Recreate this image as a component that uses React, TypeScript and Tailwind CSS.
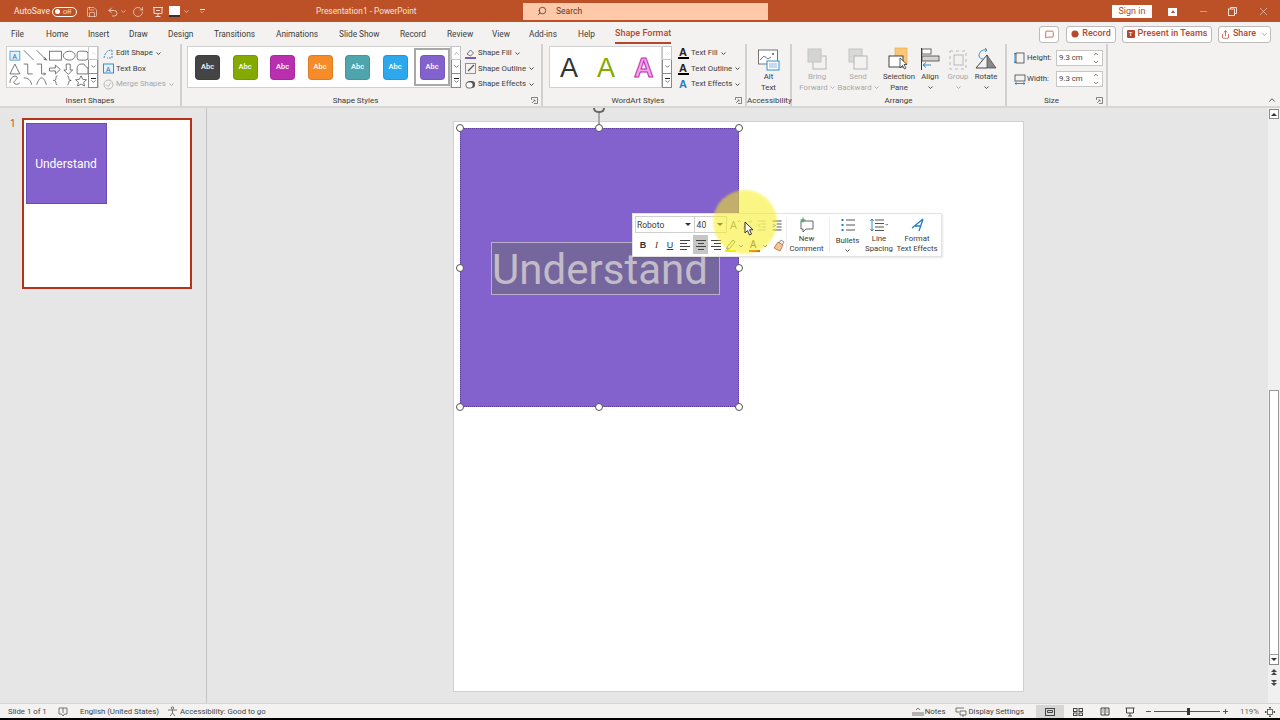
import { Search, ChevronDown, ChevronUp, X, Minus, Undo2, RotateCw, Save, MessageSquare, Share, Circle } from "lucide-react";
import type { ReactNode } from "react";

const tabs = [
  { label: "File", cls: "w-[35px]" },
  { label: "Home", cls: "w-[42px]" },
  { label: "Insert", cls: "w-[41px]" },
  { label: "Draw", cls: "w-[39px]" },
  { label: "Design", cls: "w-[46px]" },
  { label: "Transitions", cls: "w-[62px]" },
  { label: "Animations", cls: "w-[63px]" },
  { label: "Slide Show", cls: "w-[61px]" },
  { label: "Record", cls: "w-[47px]" },
  { label: "Review", cls: "w-[45px]" },
  { label: "View", cls: "w-[37px]" },
  { label: "Add-ins", cls: "w-[49px]" },
  { label: "Help", cls: "w-[37px]" },
];

const swatches = ["bg-[#444444]", "bg-[#84aa00]", "bg-[#b92fb0]", "bg-[#f68b2a]", "bg-[#4ea5ae]", "bg-[#2da8ec]", "bg-[#8362cd]"];

function Caret({ className = "" }: { className?: string }) {
  return (
    <svg width="5" height="3" viewBox="0 0 5 3" className={`inline-block shrink-0 ${className}`}>
      <path d="M0.5 0.5 2.500 2.500 4.500 0.5" fill="none" stroke="currentColor" strokeWidth="0.9" />
    </svg>
  );
}

function ScrollButtons({ first = false }: { first?: boolean }) {
  return (
    <div className="mt-[2px] flex w-[10px] shrink-0 flex-col">
      <div className="flex h-[14px] items-center justify-center border border-[#c6c6c6] bg-white">
        <ChevronUp size={7} className={first ? "text-[#c8c8c8]" : "text-[#777]"} />
      </div>
      <div className="flex h-[14px] items-center justify-center border border-t-0 border-[#8a8a8a] bg-white">
        <ChevronDown size={7} className="text-[#222]" />
      </div>
      <div className="flex h-[14px] flex-col items-center justify-center border border-t-0 border-[#8a8a8a] bg-white">
        <div className="mb-[1px] h-px w-[5px] bg-[#222]" />
        <ChevronDown size={7} className="-my-[2px] text-[#222]" />
      </div>
    </div>
  );
}

function ShapesGlyphs() {
  return (
    <svg width="82" height="40" viewBox="0 0 82 40" fill="none" stroke="#555" strokeWidth="0.8" className="mt-px">
      <rect x="3" y="3" width="10" height="9" stroke="#2f8fd0" fill="#e4f1fb" />
      <text x="5.500" y="10.500" fontSize="7" fill="#2b6cb0" stroke="none" fontFamily="Noto Sans">A</text>
      <path d="M17 2 27 12M30 2 40 12M38 9l2 3-3-1" />
      <rect x="43" y="3" width="12" height="9" />
      <ellipse cx="63" cy="7.500" rx="6" ry="4.500" />
      <rect x="71" y="3" width="11" height="9" rx="2.500" />
      <path d="M3 26 8 16l5 10Z" />
      <path d="M17 16h4v10h5M30 16h5v10h4M37.500 24.500l1.500 1.500-1.500 1.500" />
      <path d="M43 20h6v-3l5 4.500-5 4.500v-3h-6Z" />
      <path d="M60 16h4v6h2.500l-4.500 4.500-4.500-4.500h2.500Z" />
      <path d="M71 26v-6c0-2 1.500-4 4-4h3c1 2 2 3 4 4v6Z" />
      <path d="M3 35c0-6 5-8 7-6s-4 4-3 6 4 2 6 0" />
      <path d="M17 30c4 0 7 2 8 7M30 37c2-5 3-7 5-7s3 2 5 7" />
      <path d="M51 28c-2 0-1 3-2 4-.5.5-1 .6-2 .6 1 0 1.500.100 2 .6 1 1 0 4 2 4" />
      <path d="M61 28c2 0 1 3 2 4 .5.5 1 .6 2 .6-1 0-1.500.100-2 .6-1 1 0 4-2 4" />
      <path d="m75 28 1.800 3.500 3.700.4-2.800 2.500.8 3.800-3.500-1.900-3.500 1.900.8-3.800-2.800-2.500 3.700-.4Z" />
    </svg>
  );
}

function SideItem({ icon, label, disabled = false }: { icon: ReactNode; label: string; disabled?: boolean }) {
  return (
    <div className={`flex h-[15.500px] items-center gap-[2px] whitespace-nowrap ${disabled ? "text-[#a6a6a6]" : "text-[#3b3b3b]"}`}>
      <span className="flex w-[12px] justify-center">{icon}</span>
      <span>{label}</span>
      <Caret className="ml-px" />
    </div>
  );
}

function Launcher() {
  return (
    <svg width="7" height="7" viewBox="0 0 7 7" className="absolute bottom-[2px] right-[3px]" fill="none" stroke="#666" strokeWidth="0.8">
      <path d="M.5 3V.5H6.500V6.500H3" />
      <path d="M1 6 4 3M2.500 3H4V4.500" />
    </svg>
  );
}

function Group({ label, className, labelCls = "", children, launcher = false }: { label: string; className: string; labelCls?: string; children: ReactNode; launcher?: boolean }) {
  return (
    <div className={`relative flex h-full shrink-0 flex-col border-r-2 border-[#d2d0ce] ${className}`}>
      <div className="flex min-h-0 flex-1 items-start">{children}</div>
      <div className={`h-[11px] whitespace-nowrap text-center text-[8px] leading-[12px] text-[#3b3b3b] ${labelCls}`}>{label}</div>
      {launcher && <Launcher />}
    </div>
  );
}

function BigButton({ icon, lines, caret = false, disabled = false, className = "" }: { icon: ReactNode; lines: string[]; caret?: boolean; disabled?: boolean; className?: string }) {
  return (
    <div className={`flex shrink-0 flex-col items-center whitespace-nowrap text-center leading-[11px] ${disabled ? "text-[#a9a9a9]" : "text-[#3b3b3b]"} ${className}`}>
      <div className="flex h-[27px] items-end">{icon}</div>
      <div>{lines[0]}</div>
      <div className="flex h-[11px] items-center gap-[2px]">
        {lines[1]}
        {caret && <Caret />}
      </div>
    </div>
  );
}

function TwoSquares({ back = false }: { back?: boolean }) {
  return (
    <svg width="20" height="24" viewBox="0 0 20 24">
      {back ? (
        <>
          <rect x="1" y="2" width="13" height="13" fill="#d9d9d9" stroke="#c4c4c4" />
          <rect x="6" y="9" width="13" height="13" fill="#f3f2f1" stroke="#b4b4b4" />
        </>
      ) : (
        <>
          <rect x="6" y="9" width="13" height="13" fill="#f3f2f1" stroke="#b4b4b4" />
          <rect x="1" y="2" width="13" height="13" fill="#d4d4d4" stroke="#c4c4c4" />
        </>
      )}
    </svg>
  );
}

function SizeRow({ icon, label }: { icon: ReactNode; label: string }) {
  return (
    <div className="flex h-[16px] items-center">
      <span className="flex w-[13px] justify-center">{icon}</span>
      <span className="w-[30px] pl-[1px] text-[#3b3b3b]">{label}</span>
      <div className="flex h-[16px] w-[47px] items-center justify-between border border-[#c8c6c4] bg-white pl-[2px] pr-[3px] text-[#444]">
        <span>9.3 cm</span>
        <span className="flex flex-col gap-[2px]">
          <ChevronUp size={6} strokeWidth={3} />
          <ChevronDown size={6} strokeWidth={3} />
        </span>
      </div>
    </div>
  );
}

function MiniToolbar() {
  const alignLines = [
    ["w-[10px]", "w-[7px]", "w-[10px]", "w-[7px]", "items-start"],
    ["w-[10px]", "w-[6px]", "w-[10px]", "w-[6px]", "items-center"],
    ["w-[10px]", "w-[7px]", "w-[10px]", "w-[7px]", "items-end"],
  ];
  return (
    <div className="absolute left-[632px] top-[213px] z-20 flex h-[44px] w-[310px] border border-[#e3e3e3] bg-white text-[7.800px] leading-[10px] text-[#3b3b3b] shadow-[1px_1px_2px_rgba(0,0,0,0.1)]">
      <div className="flex w-[153px] shrink-0 flex-col pl-[2px] pt-[2px]">
        <div className="flex h-[17px] items-center">
          <div className="flex h-[17px] w-[60px] items-center justify-between border border-[#d0d0d0] pl-[1px] pr-[3px]">
            <span className="text-[8.500px]">Roboto</span>
            <span className="h-0 w-0 border-x-[3px] border-t-[3px] border-x-transparent border-t-[#333]" />
          </div>
          <div className="flex h-[17px] w-[33px] items-center justify-between border border-l-0 border-[#d0d0d0] pl-[2px] pr-[3px]">
            <span className="text-[8.500px]">40</span>
            <span className="h-0 w-0 border-x-[3px] border-t-[3px] border-x-transparent border-t-[#333]" />
          </div>
          <svg width="58" height="14" viewBox="0 0 58 14" className="ml-[1px]">
            <text x="2" y="11" fontSize="11" fill="#8c8c8c" fontFamily="Noto Sans">A</text>
            <path d="M10 4l1.500-1.500L13 4" fill="none" stroke="#8c8c8c" strokeWidth=".7" />
            <text x="15" y="11" fontSize="9" fill="#8c8c8c" fontFamily="Noto Sans">A</text>
            <path d="M21 3l1.500 1.500L24 3" fill="none" stroke="#6aa83a" strokeWidth=".7" />
            <path d="M30 3h8M34 6h4M34 9h4M30 12h8" stroke="#bcbcbc" strokeWidth="1" />
            <path d="M33 6 30 7.500 33 9" fill="none" stroke="#a8cfa0" strokeWidth=".8" />
            <path d="M45 3h9M49 6h5M49 9h5M45 12h9" stroke="#555" strokeWidth="1" />
            <path d="M45 6l3 1.500L45 9" fill="none" stroke="#2f8fd0" strokeWidth=".8" />
          </svg>
        </div>
        <div className="mt-[2px] flex h-[19px] items-center pl-[1px]">
          <span className="flex w-[14px] justify-center font-['Liberation_Sans',sans-serif] text-[9px] font-bold text-[#333]">B</span>
          <span className="flex w-[13px] justify-center font-['Liberation_Serif',serif] text-[9px] italic text-[#333]">I</span>
          <span className="flex w-[14px] justify-center font-['Liberation_Sans',sans-serif] text-[9px] text-[#333] underline">U</span>
          <span className="w-px" />
          {alignLines.map((a, i) => (
            <span key={i} className={`flex h-[19px] w-[15px] flex-col justify-center gap-[2px] px-[2px] ${a[4]} ${i === 1 ? "bg-[#c6c6c6]" : ""}`}>
              <span className={`h-px bg-[#444] ${a[0]}`} />
              <span className={`h-px bg-[#444] ${a[1]}`} />
              <span className={`h-px bg-[#444] ${a[2]}`} />
              <span className={`h-px bg-[#444] ${a[3]}`} />
            </span>
          ))}
          <svg width="62" height="16" viewBox="0 0 62 16">
            <path d="M4 10 10 3l2 2-6 7H4Z" fill="none" stroke="#6d6d4a" strokeWidth=".9" />
            <rect x="2" y="13" width="11" height="2" fill="#f4e900" />
            <path d="M16 8l2 2 2-2" fill="none" stroke="#666" strokeWidth=".8" />
            <text x="27" y="11" fontSize="10" fill="#555" fontFamily="Noto Sans">A</text>
            <rect x="26" y="13" width="11" height="2" fill="#e8410f" />
            <path d="M40 8l2 2 2-2" fill="none" stroke="#666" strokeWidth=".8" />
            <path d="M51 11l4-6 5 3-3 6Z" fill="#f3c59a" stroke="#c0662a" strokeWidth=".8" />
            <path d="M56 6l2-3 3 2-2 3" fill="none" stroke="#777" strokeWidth=".8" />
          </svg>
        </div>
      </div>
      <div className="my-[3px] w-px bg-[#ececec]" />
      <div className="flex w-[39px] shrink-0 flex-col items-center pt-[3px] text-center">
        <svg width="16" height="16" viewBox="0 0 16 16" fill="none">
          <path d="M2 4h12v8H7l-3 3v-3H2Z" stroke="#555" strokeWidth=".9" fill="#fff" />
          <path d="M4 0.500v5M1.500 3h5" stroke="#2e9b46" strokeWidth="1" />
        </svg>
        <span className="mt-[1px]">New</span>
        <span>Comment</span>
      </div>
      <div className="my-[3px] ml-[3px] w-px bg-[#ececec]" />
      <div className="flex w-[35px] shrink-0 flex-col items-center pt-[3px]">
        <svg width="16" height="16" viewBox="0 0 16 16">
          <path d="M6 3h9M6 8h9M6 13h9" stroke="#555" strokeWidth="1" />
          <path d="M1.500 3h2M1.500 8h2M1.500 13h2" stroke="#1f7fc4" strokeWidth="2" />
        </svg>
        <span className="mt-[3px]">Bullets</span>
        <Caret className="mt-[3px]" />
      </div>
      <div className="flex w-[28px] shrink-0 flex-col items-center whitespace-nowrap pt-[3px]">
        <svg width="20" height="16" viewBox="0 0 20 16" fill="none">
          <path d="M3 2v12M1.500 4 3 2l1.500 2M1.500 12 3 14l1.500-2" stroke="#1f7fc4" strokeWidth=".9" />
          <path d="M6 3h9M6 6.500h9M6 10h9M6 13.500h9" stroke="#555" strokeWidth="1" />
          <path d="M16.500 7l1.200 1.200L19 7" stroke="#555" strokeWidth=".8" />
        </svg>
        <span className="mt-[1px]">Line</span>
        <span>Spacing</span>
      </div>
      <div className="flex flex-1 flex-col items-center whitespace-nowrap pt-[3px]">
        <svg width="16" height="16" viewBox="0 0 16 16" fill="none">
          <path d="M14 2 3 11M14 2 10 14M6 9h6" stroke="#1f7fc4" strokeWidth="1.300" strokeLinejoin="round" />
        </svg>
        <span className="mt-[1px]">Format</span>
        <span>Text Effects</span>
      </div>
    </div>
  );
}

function Handle({ cls }: { cls: string }) {
  return <span className={`absolute z-10 h-[8px] w-[8px] rounded-full border border-[#555] bg-white ${cls}`} />;
}

export default function App() {
  return (
    <div className="relative flex h-[720px] w-[1280px] flex-col overflow-hidden bg-[#e6e6e6] font-['Roboto',sans-serif] text-[9px]">
      {/* title bar */}
      <header className="relative z-10 flex h-[22px] shrink-0 items-center bg-[#bc5127] pt-px text-[#fbeee8]">
        <div className="flex w-[316px] shrink-0 items-center">
          <span className="ml-[14px] w-[36px] whitespace-nowrap text-[8.500px]">AutoSave</span>
          <span className="ml-[2px] flex h-[10px] w-[25px] items-center gap-[3px] rounded-full border border-white pl-[2px] text-[6px]">
            <span className="h-[5px] w-[5px] rounded-full bg-white" />
            Off
          </span>
          <Save size={12} strokeWidth={1.2} className="ml-[9px]" />
          <Undo2 size={12} strokeWidth={1.4} className="ml-[9px]" />
          <ChevronDown size={7} className="ml-px" />
          <RotateCw size={12} strokeWidth={1.2} className="ml-[5px]" />
          <svg width="12" height="12" viewBox="0 0 12 12" fill="none" stroke="currentColor" className="ml-[8px]">
            <path d="M1 1.500h10M2 1.500v6h8v-6M6 7.500v3M3.500 10.500h5M4 4.500h4" strokeWidth=".9" />
          </svg>
          <span className="ml-[5px] flex h-[11px] w-[11px] flex-col justify-end bg-white">
            <span className="h-[2px] bg-[#333]" />
          </span>
          <ChevronDown size={7} className="ml-[3px]" />
          <span className="ml-[9px] flex flex-col items-center">
            <span className="h-px w-[5px] bg-white" />
            <ChevronDown size={6} className="-mt-px" />
          </span>
        </div>
        <span className="w-[207px] shrink-0 whitespace-nowrap text-[8.300px] text-[#f6e3da]">Presentation1 - PowerPoint</span>
        <div className="-mt-px flex h-[17px] w-[245px] shrink-0 items-center bg-[#fdc9a8] text-[8.500px] text-[#5a3a2a]">
          <Search size={10} className="ml-[14px] -scale-x-100" />
          <span className="ml-[9px]">Search</span>
        </div>
        <div className="ml-auto flex items-center">
          <span className="flex h-[13px] w-[40px] items-center justify-center bg-white text-[#b5431f]">Sign in</span>
          <span className="ml-[16px] flex h-[8px] w-[9px] items-start justify-center bg-white">
            <span className="mt-[2px] h-0 w-0 border-x-[2px] border-b-[3px] border-x-transparent border-b-[#bc5127]" />
          </span>
          <Minus size={11} strokeWidth={1} className="ml-[21px]" />
          <svg width="9" height="9" viewBox="0 0 9 9" fill="none" stroke="currentColor" strokeWidth=".9" className="ml-[19px]">
            <rect x=".5" y="2" width="6" height="6.500" />
            <path d="M2.500 2V.5h6v6H6.500" />
          </svg>
          <X size={13} strokeWidth={1} className="ml-[20px] mr-[10px]" />
        </div>
      </header>

      {/* tabs */}
      <nav className="relative z-10 flex h-[22px] shrink-0 items-center bg-[#f3f2f1] pl-[11px] pt-[2px] text-[8.300px] text-[#3b3b3b]">
        {tabs.map((t) => (
          <span key={t.label} className={`whitespace-nowrap ${t.cls}`}>
            {t.label}
          </span>
        ))}
        <span className="relative whitespace-nowrap text-[9px] font-medium text-[#b7472a]">
          Shape Format
          <span className="absolute -bottom-[3px] left-0 right-0 h-[2px] bg-[#b7472a]" />
        </span>
        <div className="ml-auto mr-[9px] flex items-center gap-[6px] text-[9px]">
          <span className="mr-px flex h-[17px] w-[20px] items-center justify-center rounded-[3px] border border-[#bdbbb9] bg-white">
            <MessageSquare size={9} className="text-[#b7472a]" />
          </span>
          <span className="flex h-[17px] w-[50px] items-center justify-center gap-[3px] rounded-[3px] border border-[#bdbbb9] bg-white font-medium text-[#b7472a]">
            <Circle size={8} fill="#b7472a" strokeWidth={1.5} />
            Record
          </span>
          <span className="flex h-[17px] w-[90px] items-center justify-center gap-[3px] whitespace-nowrap rounded-[3px] border border-[#bdbbb9] bg-white font-medium text-[#b7472a]">
            <span className="flex h-[8px] w-[8px] items-center justify-center rounded-[1px] bg-[#b7472a] text-[6px] leading-none text-white">T</span>
            Present in Teams
          </span>
          <span className="flex h-[17px] w-[53px] items-center justify-center gap-[3px] rounded-[3px] border border-[#bdbbb9] bg-white font-medium text-[#b7472a]">
            <Share size={9} />
            Share
            <ChevronDown size={7} className="ml-[2px]" />
          </span>
        </div>
      </nav>

      {/* ribbon */}
      <section className="relative z-10 flex h-[64px] shrink-0 items-stretch border-b-2 border-[#d8d6d4] bg-[#f3f2f1] text-[7.800px]">
        <Group label="Insert Shapes" className="w-[182px]">
          <div className="ml-[6px] mt-[2px] flex h-[42px] w-[93px] border border-[#d0d0d0] bg-white">
            <ShapesGlyphs />
            <div className="-mt-[3px]">
              <ScrollButtons first />
            </div>
          </div>
          <div className="ml-[3px] mt-[1.500px] flex flex-col">
            <SideItem
              label="Edit Shape"
              icon={
                <svg width="11" height="11" viewBox="0 0 11 11" fill="none">
                  <path d="M1 10c1-5 3-8 8-8M9 2v8H4" stroke="#1f7fc4" strokeWidth=".9" strokeDasharray="2 1" />
                </svg>
              }
            />
            <div className="flex h-[15.500px] items-center gap-[2px] text-[#3b3b3b]">
              <span className="flex w-[12px] justify-center">
                <svg width="11" height="11" viewBox="0 0 11 11">
                  <rect x=".5" y="1" width="10" height="9" fill="#e4f1fb" stroke="#2f8fd0" />
                  <text x="3" y="8.500" fontSize="7" fill="#2b6cb0" fontFamily="Noto Sans">A</text>
                </svg>
              </span>
              Text Box
            </div>
            <SideItem
              disabled
              label="Merge Shapes"
              icon={
                <svg width="11" height="11" viewBox="0 0 11 11" fill="none" stroke="#b8b8b8">
                  <circle cx="5.500" cy="5.500" r="4.500" />
                  <path d="M3 5.500 5 7.500 8 3.500" />
                </svg>
              }
            />
          </div>
        </Group>

        <Group label="Shape Styles" labelCls="pr-[12px]" className="w-[361px]" launcher>
          <div className="ml-[5px] mt-[2px] flex h-[42px] w-[264px] items-center border border-[#d0d0d0] bg-white pl-[7px]">
            {swatches.map((s, i) => (
              <div key={s} className={`flex shrink-0 items-center justify-center ${i === 6 ? "ml-[-6px] h-[38px] w-[36px] border-2 border-[#a8a8a8] shadow-[inset_0_0_0_1px_#fff]" : "mr-[12.500px]"}`}>
                <span className={`flex h-[25px] w-[25px] items-center justify-center rounded-[4px] border border-black/10 text-[7.500px] font-medium text-white ${s}`}>Abc</span>
              </div>
            ))}
          </div>
          <ScrollButtons />
          <div className="ml-[3px] mt-[1.500px] flex flex-col">
            <SideItem
              label="Shape Fill"
              icon={
                <svg width="11" height="11" viewBox="0 0 11 11" fill="none">
                  <path d="M2 6 5.500 2l3 3-3 3Z" stroke="#555" strokeWidth=".8" />
                  <rect x="0" y="9" width="11" height="2" fill="#7a5bc0" />
                </svg>
              }
            />
            <SideItem
              label="Shape Outline"
              icon={
                <svg width="11" height="11" viewBox="0 0 11 11" fill="none">
                  <rect x=".5" y=".5" width="10" height="10" stroke="#6d9dc7" />
                  <path d="M3 8 9 2" stroke="#555" strokeWidth="1.200" />
                </svg>
              }
            />
            <SideItem
              label="Shape Effects"
              icon={
                <svg width="11" height="11" viewBox="0 0 11 11" fill="none">
                  <rect x="2" y="2" width="8" height="7" rx="3" fill="#555" />
                  <rect x="1" y="3" width="7" height="6" rx="2.500" fill="#fff" stroke="#444" strokeWidth=".8" />
                </svg>
              }
            />
          </div>
        </Group>

        <Group label="WordArt Styles" labelCls="pr-[12px]" className="w-[204px]" launcher>
          <div className="ml-[6px] mt-[2px] flex h-[42px] w-[113px] items-center border border-[#d0d0d0] bg-white pl-[10px] pt-[3px]">
            <span className="w-[37px] font-['Liberation_Sans',sans-serif] text-[27px] leading-none text-[#333]">A</span>
            <span className="w-[37px] font-['Liberation_Sans',sans-serif] text-[27px] leading-none text-[#84aa00]">A</span>
            <span className="font-['Liberation_Sans',sans-serif] text-[27px] font-bold leading-none text-[#f6a6ee] [-webkit-text-stroke:1px_#b92fb0]">A</span>
          </div>
          <ScrollButtons first />
          <div className="ml-[5px] mt-[1.500px] flex flex-col">
            {[
              ["Text Fill", "#222"],
              ["Text Outline", "#222"],
              ["Text Effects", "#1f7fc4"],
            ].map(([label, color]) => (
              <SideItem
                key={label}
                label={label}
                icon={
                  <span className="flex flex-col items-center font-['Liberation_Sans',sans-serif] text-[11px] font-bold leading-[10px]" style={{ color }}>
                    A
                    {label !== "Text Effects" && <span className="h-[2px] w-[11px] bg-black" />}
                  </span>
                }
              />
            ))}
          </div>
        </Group>

        <Group label="Accessibility" className="w-[45px]">
          <BigButton
            className="w-full"
            lines={["Alt", "Text"]}
            icon={
              <svg width="22" height="22" viewBox="0 0 22 22" fill="none">
                <rect x=".5" y="1" width="19" height="14" fill="#fff" stroke="#555" strokeWidth=".8" />
                <path d="M2 11l4-4 4 3 3-2" stroke="#555" strokeWidth=".8" />
                <circle cx="15" cy="5" r="1" fill="#555" />
                <rect x="9" y="12" width="12" height="9" fill="#fff" stroke="#2f8fd0" />
                <rect x="11" y="14" width="8" height="5" fill="#bfdcf0" />
              </svg>
            }
          />
        </Group>

        <Group label="Arrange" className="w-[215px]">
          <div className="flex h-full w-full justify-start pl-[6px]">
            <BigButton className="w-[38px]" disabled caret lines={["Bring", "Forward"]} icon={<TwoSquares />} />
            <BigButton className="w-[44px]" disabled caret lines={["Send", "Backward"]} icon={<TwoSquares back />} />
            <BigButton
              className="w-[38px]"
              lines={["Selection", "Pane"]}
              icon={
                <svg width="24" height="24" viewBox="0 0 24 24">
                  <rect x="8" y="1" width="12" height="16" fill="#fbc777" stroke="#e5a53c" strokeWidth=".6" />
                  <rect x="2" y="9" width="14" height="11" fill="#fff" stroke="#444" />
                  <path d="M13 11v10l2.500-2.500 2 3.500 1.500-1-2-3.500H20Z" fill="#fff" stroke="#333" strokeWidth=".8" />
                </svg>
              }
            />
            <BigButton
              className="w-[24px]"
              caret
              lines={["Align", ""]}
              icon={
                <svg width="20" height="24" viewBox="0 0 20 24" fill="none">
                  <path d="M1.500 1v22" stroke="#333" />
                  <rect x="2" y="2" width="9" height="5" fill="#fff" stroke="#444" strokeWidth=".8" />
                  <rect x="2" y="9" width="17" height="5" fill="#d4d4d4" stroke="#444" strokeWidth=".8" />
                  <path d="M11 18H3M6 15.500 3 18l3 2.500" stroke="#1f7fc4" strokeWidth=".9" />
                </svg>
              }
            />
            <BigButton
              className="w-[32px]"
              disabled
              caret
              lines={["Group", ""]}
              icon={
                <svg width="20" height="22" viewBox="0 0 20 22" fill="none" stroke="#b8b8b8">
                  <rect x="2" y="2" width="16" height="18" strokeDasharray="3 3" />
                  <rect x="6" y="6" width="9" height="10" />
                </svg>
              }
            />
            <BigButton
              className="w-[24px]"
              caret
              lines={["Rotate", ""]}
              icon={
                <svg width="22" height="24" viewBox="0 0 22 24" fill="none">
                  <path d="M12 8 21 21H12Z" fill="#888" stroke="#444" strokeWidth=".7" />
                  <path d="M1 21 12 8" stroke="#444" />
                  <path d="M1 21h11" stroke="#444" />
                  <path d="M4 9c0-4 3-7 8-6M10 1l2 2-2 2M4 9c1 2 2 3 4 3" stroke="#1f7fc4" strokeWidth=".9" />
                </svg>
              }
            />
          </div>
        </Group>

        <Group label="Size" labelCls="pr-[10px]" className="w-[101px]" launcher>
          <div className="ml-[6px] mt-[6px] flex flex-col gap-[5px]">
            <SizeRow
              label="Height:"
              icon={
                <svg width="11" height="12" viewBox="0 0 11 12" fill="none">
                  <rect x="2" y="1" width="8" height="10" stroke="#444" strokeWidth=".8" />
                  <path d="M1 1v10M0 2.500 1 1l1 1.500M0 9.500 1 11l1-1.500" stroke="#1f7fc4" strokeWidth=".9" />
                </svg>
              }
            />
            <SizeRow
              label="Width:"
              icon={
                <svg width="12" height="11" viewBox="0 0 12 11" fill="none">
                  <rect x="1" y="1" width="10" height="6" stroke="#444" strokeWidth=".8" />
                  <path d="M1 9.500h10M2.500 8.500 1 9.500l1.500 1M9.500 8.500l1.500 1-1.500 1" stroke="#1f7fc4" strokeWidth=".9" />
                </svg>
              }
            />
          </div>
        </Group>
        <div className="relative flex-1">
          <ChevronUp size={10} className="absolute bottom-[1px] right-[3px] text-[#333]" />
        </div>
      </section>

      {/* workspace */}
      <main className="flex min-h-0 flex-1">
        <aside className="flex w-[207px] shrink-0 items-start border-r border-[#c4c4c4] pl-[10px] pt-[10px]">
          <span className="w-[12px] text-[10px] leading-[12px] text-[#c4502a]">1</span>
          <div className="h-[171px] w-[170px] border-2 border-[#b7321a] bg-white px-[2px] pt-[3px]">
            <div className="flex h-[81px] w-[81px] items-center justify-center border border-[#6a4cb8] bg-[#8362cd] pr-px text-[12px] text-white">
              Understand
            </div>
          </div>
        </aside>
        <div className="flex min-w-0 flex-1 items-start">
          <div className="ml-[246px] mt-[13px] h-[571px] w-[571px] border border-[#d0d0d0] bg-white" />
        </div>
        <div className="flex w-[12px] shrink-0 flex-col items-center bg-[#f0f0f0]">
          <div className="mt-[1px] flex h-[10px] w-[10px] items-center justify-center border border-[#8a8a8a] bg-white">
            <span className="h-0 w-0 border-x-[3px] border-b-[3px] border-x-transparent border-b-[#333]" />
          </div>
          <div className="mt-[271px] h-[265px] w-[10px] border border-[#9a9a9a] bg-white" />
          <div className="flex h-[10px] w-[10px] items-center justify-center border border-t-0 border-[#8a8a8a] bg-white">
            <span className="h-0 w-0 border-x-[3px] border-t-[3px] border-x-transparent border-t-[#333]" />
          </div>
          <div className="mt-[4px] flex flex-col items-center">
            <span className="h-0 w-0 border-x-[3px] border-b-[3px] border-x-transparent border-b-[#444]" />
            <span className="h-0 w-0 border-x-[3px] border-b-[3px] border-x-transparent border-b-[#444]" />
          </div>
          <div className="mt-[5px] flex flex-col items-center">
            <span className="h-0 w-0 border-x-[3px] border-t-[3px] border-x-transparent border-t-[#444]" />
            <span className="h-0 w-0 border-x-[3px] border-t-[3px] border-x-transparent border-t-[#444]" />
          </div>
        </div>
      </main>

      {/* status bar */}
      <footer className="flex h-[15px] shrink-0 items-center border-t border-[#d6d6d6] bg-[#f3f2f1] pt-px text-[7.800px] text-[#444]">
        <span className="ml-[8px] w-[50px]">Slide 1 of 1</span>
        <svg width="10" height="10" viewBox="0 0 10 10" fill="none" stroke="#555" strokeWidth=".8">
          <path d="M1 1h8v6H6.500L5 9 3.500 7H1ZM5 1v5" />
        </svg>
        <span className="ml-[12px] w-[86px] whitespace-nowrap">English (United States)</span>
        <svg width="11" height="11" viewBox="0 0 11 11" fill="none" stroke="#555" strokeWidth=".8" className="ml-[1px]">
          <circle cx="5.500" cy="2" r="1.200" />
          <path d="M1 4h9M5.500 4v3M3 10l2.500-3L8 10" />
        </svg>
        <span className="ml-[2px]">Accessibility: Good to go</span>
        <div className="ml-auto flex h-full items-center">
          <svg width="12" height="10" viewBox="0 0 12 10" fill="none" stroke="#555" strokeWidth=".8">
            <path d="M4 3l2-2 2 2M0 6h12M0 8h12" />
          </svg>
          <span className="ml-[1px]">Notes</span>
          <svg width="12" height="10" viewBox="0 0 12 10" fill="none" stroke="#555" strokeWidth=".8" className="ml-[10px]">
            <path d="M1 1h8M1 1v4h3M5 4h6v4H5ZM8 8v2" />
          </svg>
          <span className="ml-[1px]">Display Settings</span>
          <span className="ml-[12px] flex h-full w-[28px] items-center justify-center bg-[#d6d6d6]">
            <svg width="10" height="8" viewBox="0 0 10 8" fill="none" stroke="#444"><rect x=".5" y=".5" width="9" height="7" /><path d="M2.500 2.500h5v2h-5Z" /></svg>
          </span>
          <span className="flex h-full w-[27px] items-center justify-center">
            <svg width="10" height="8" viewBox="0 0 10 8" fill="none" stroke="#444"><rect x=".5" y=".5" width="3.500" height="3" /><rect x="6" y=".5" width="3.500" height="3" /><rect x=".5" y="5" width="3.500" height="2.500" /><rect x="6" y="5" width="3.500" height="2.500" /></svg>
          </span>
          <span className="flex h-full w-[27px] items-center justify-center">
            <svg width="10" height="9" viewBox="0 0 10 9" fill="none" stroke="#444"><path d="M5 1v7M1 1h8v7H1ZM2.500 3h1M6.500 3h1M2.500 5h1M6.500 5h1" /></svg>
          </span>
          <span className="flex h-full w-[24px] items-center justify-center">
            <svg width="10" height="10" viewBox="0 0 10 10" fill="none" stroke="#444"><path d="M0.500 1h9M1.500 1v5h7V1M5 6v3M3 9h4" /></svg>
          </span>
          <span className="ml-[4px] h-px w-[5px] bg-[#555]" />
          <span className="relative ml-[3px] h-px w-[66px] bg-[#555]">
            <span className="absolute left-[33px] top-[-3px] h-[7px] w-[3px] bg-[#333]" />
          </span>
          <span className="relative ml-[3px] h-px w-[5px] bg-[#555]">
            <span className="absolute left-[2px] top-[-2px] h-[5px] w-px bg-[#555]" />
          </span>
          <span className="ml-[12px] w-[20px] text-[#666]">119%</span>
          <svg width="10" height="10" viewBox="0 0 10 10" fill="none" stroke="#444" strokeWidth=".8" className="ml-[5px] mr-[5px]">
            <rect x="2.500" y="2.500" width="5" height="5" />
            <path d="M5 0l1 1H4ZM5 10l1-1H4ZM0 5l1-1v2ZM10 5 9 4v2Z" fill="#444" />
          </svg>
        </div>
      </footer>
      <div className="h-[2px] shrink-0 bg-black" />

      {/* selected shape on the slide */}
      <div className="absolute left-[460px] top-[128px] h-[279px] w-[279px] border border-dotted border-[#5a3f9f] bg-[#8362cd]">
        <div className="absolute left-[30px] top-[113px] flex h-[53px] w-[229px] items-center justify-center border border-[#b7b0c8] bg-[#76669e] pr-[11px] pt-[2px] text-[42px] leading-none text-[#c2bcc8]">
          Understand
        </div>
      </div>
      <div className="absolute left-[598px] top-[112px] h-[16px] w-[2px] bg-[#a8a8a8]" />
      <div className="absolute left-[593px] top-[108px] h-[5px] w-[12px] rounded-b-full border-x-2 border-b-2 border-[#666]" />
      <Handle cls="left-[455.500px] top-[124px]" />
      <Handle cls="left-[595px] top-[124px]" />
      <Handle cls="left-[734.500px] top-[124px]" />
      <Handle cls="left-[455.500px] top-[264px]" />
      <Handle cls="left-[734.500px] top-[264px]" />
      <Handle cls="left-[455.500px] top-[403px]" />
      <Handle cls="left-[595px] top-[403px]" />
      <Handle cls="left-[734.500px] top-[403px]" />

      <MiniToolbar />

      {/* cursor highlight */}
      <div className="absolute left-[713px] top-[190px] z-30 h-[64px] w-[64px] rounded-full bg-[#f7ee1e]/55 blur-[1px]" />
      <svg width="10" height="15" viewBox="0 0 10 15" className="absolute left-[744px] top-[221px] z-40">
        <path d="M1 1v11l2.500-2.500 2 4.500 2-1-2-4.200H9Z" fill="#fff" stroke="#222" strokeWidth=".9" />
      </svg>
    </div>
  );
}
